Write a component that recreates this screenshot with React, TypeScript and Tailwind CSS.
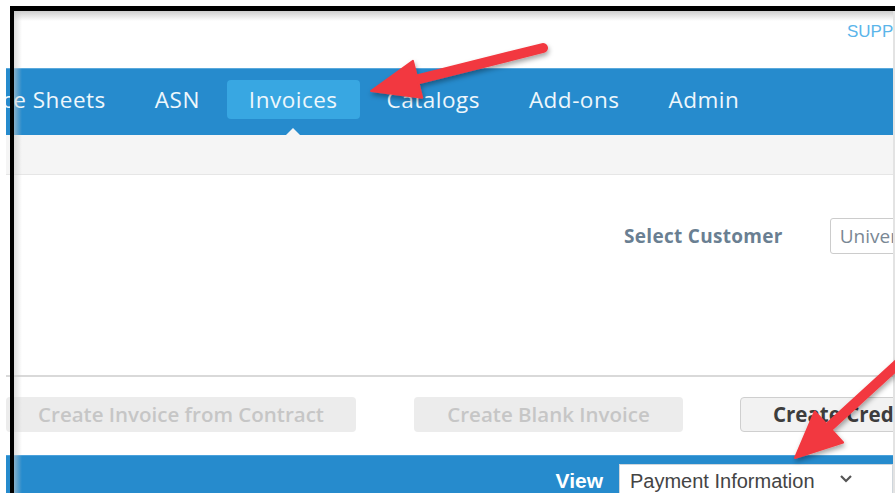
import React from 'react';

// Top navigation entries; the first one scrolls partly off the left edge
const NAV_ITEMS = ['Price Sheets', 'ASN', 'Invoices', 'Catalogs', 'Add-ons', 'Admin'];
const ACTIVE_TAB = 'Invoices';

function Arrow({ x1, y1, x2, y2, head = 46, spread = 20 }: { x1: number; y1: number; x2: number; y2: number; head?: number; spread?: number }) {
  // Tail (x1, y1) -> tip (x2, y2)
  const dx = x2 - x1;
  const dy = y2 - y1;
  const len = Math.hypot(dx, dy);
  const ux = dx / len;
  const uy = dy / len;
  const bx = x2 - ux * head;
  const by = y2 - uy * head;
  const px = -uy;
  const py = ux;
  const pts = `${x2},${y2} ${bx + px * spread},${by + py * spread} ${bx - px * spread},${by - py * spread}`;
  return (
    <g filter="url(#arrowShadow)">
      <line x1={x1} y1={y1} x2={bx + ux * 4} y2={by + uy * 4} stroke="#f2393f" strokeWidth={10} strokeLinecap="round" />
      <polygon points={pts} fill="#f2393f" strokeLinejoin="round" stroke="#f2393f" strokeWidth={2} />
    </g>
  );
}

export default function App() {
  return (
    <div className="relative flex w-[895px] h-[493px] overflow-hidden bg-white">
      <div className="w-[6px] shrink-0" />
      <div className="flex w-[887px] shrink-0 flex-col overflow-hidden">
        {/* header strip */}
        <div className="flex h-[68px] shrink-0 justify-end bg-white">
          <span className="mt-[19px] -mr-[40px] w-[86px] font-['Liberation_Sans',sans-serif] text-[17px] text-[#5bb5ea]">SUPPORT</span>
        </div>

        {/* main nav */}
        <nav className="flex h-[67px] shrink-0 items-start gap-[5px] border-t border-[#5aa9dc] bg-[#268bcd] pt-[11px] font-['Open_Sans',sans-serif] text-[22.5px] tracking-[0.5px] text-[#eef7fc]">
          {NAV_ITEMS.map((item, i) => (
            <div
              key={item}
              className={
                'relative flex h-[39px] shrink-0 items-center whitespace-nowrap rounded-[4px] px-[22px] ' +
                (item === ACTIVE_TAB ? 'bg-[#38a7e2] ' : '') +
                (i === 0 ? '-ml-[56px]' : '')
              }
            >
              {item}
              {item === ACTIVE_TAB && (
                <span className="absolute left-1/2 top-[48px] h-0 w-0 -translate-x-1/2 border-x-[8px] border-b-[8px] border-x-transparent border-b-[#f5f5f5]" />
              )}
            </div>
          ))}
        </nav>

        {/* sub bar */}
        <div className="h-[40px] shrink-0 border-b border-[#e6e6e6] bg-[#f5f5f5]" />

        {/* customer picker */}
        <div className="h-[200px] shrink-0 bg-white">
          <div className="ml-[618px] mt-[43px] flex items-center gap-[47px]">
            <span className="whitespace-nowrap font-['Open_Sans',sans-serif] text-[19px] font-bold tracking-[0.3px] text-[#6a7f92]">Select Customer</span>
            <div className="flex h-[36px] w-[200px] shrink-0 items-center whitespace-nowrap rounded-[3px] border border-[#cccccc] px-[9px] font-['Open_Sans',sans-serif] text-[19px] text-[#7a8794]">
              University of California
            </div>
          </div>
        </div>

        <div className="h-[2px] shrink-0 bg-[#d9d9d9]" />

        {/* invoice actions */}
        <div className="flex h-[78px] shrink-0 items-start pt-[20px] font-['Open_Sans',sans-serif] text-[20.5px] font-semibold">
          <button className="h-[35px] w-[350px] shrink-0 whitespace-nowrap rounded-[4px] bg-[#ececec] text-[#c6c6c6]">Create Invoice from Contract</button>
          <button className="ml-[58px] h-[35px] w-[269px] shrink-0 whitespace-nowrap rounded-[4px] bg-[#ececec] text-[#c6c6c6]">Create Blank Invoice</button>
          <button className="ml-[57px] h-[35px] shrink-0 whitespace-nowrap rounded-[4px] border border-[#cfcfcf] bg-[#f2f2f2] px-[32px] font-bold text-[#3d3d3d]">Create Credit Memo</button>
        </div>

        {/* view bar */}
        <div className="flex h-[38px] shrink-0 items-start justify-end border-t border-[#4ba2dc] bg-[#268bcd] pt-[8px]">
          <span className="mr-[16px] mt-[1px] font-['Liberation_Sans',sans-serif] text-[21px] font-bold text-white">View</span>
          <div className="flex h-[34px] w-[274px] shrink-0 items-start justify-between border border-[#cfd6dc] bg-white pl-[10px] pr-[39px] pt-[1px] font-['Liberation_Sans',sans-serif] text-[20px] text-[#444]">
            <span>Payment Information</span>
            <svg width="14" height="10" viewBox="0 0 14 10" className="mt-[8px]">
              <path d="M2 2l5 5 5-5" fill="none" stroke="#555" strokeWidth="2.2" />
            </svg>
          </div>
        </div>
      </div>

      {/* window frame drawn over the page */}
      <div className="pointer-events-none absolute left-[10px] top-[6px] h-[5px] w-[885px] bg-black" />
      <div className="pointer-events-none absolute left-[10px] top-[11px] h-[10px] w-[885px] bg-gradient-to-b from-[#b8b8b8] to-transparent opacity-70" />
      <div className="pointer-events-none absolute left-[10px] top-[6px] h-[487px] w-[4px] bg-black" />
      <div className="pointer-events-none absolute left-[14px] top-[11px] h-[482px] w-[8px] bg-gradient-to-r from-[#c8c8c8] to-transparent opacity-60" />
      <div className="pointer-events-none absolute right-0 top-[11px] h-[482px] w-[2px] bg-[#e3e3e3]" />

      {/* callout arrows */}
      <svg className="pointer-events-none absolute left-0 top-0" width="895" height="493">
        <defs>
          <filter id="arrowShadow" x="-20%" y="-20%" width="140%" height="140%">
            <feDropShadow dx="1" dy="3" stdDeviation="2.5" floodColor="#000" floodOpacity="0.35" />
          </filter>
        </defs>
        <Arrow x1={543} y1={48} x2={371} y2={91} head={48} spread={19} />
        <Arrow x1={935} y1={330} x2={795} y2={458} head={46} spread={21} />
      </svg>
    </div>
  );
}
